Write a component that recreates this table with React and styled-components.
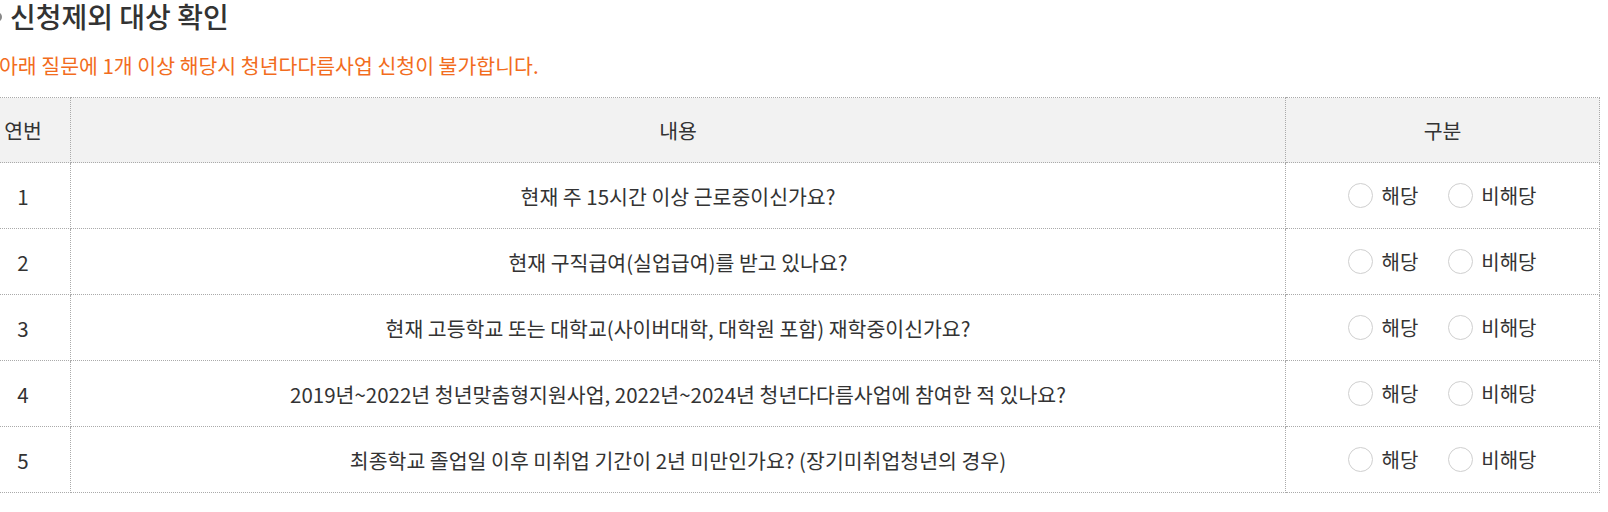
import React from "react";
import styled, { createGlobalStyle } from "styled-components";

const Global = createGlobalStyle`
  html, body { margin: 0; padding: 0; background: #fff; }
  body { font-family: "Noto Sans CJK KR", "Noto Sans", sans-serif; color: #333; overflow: hidden; }
`;

const Wrap = styled.div`
  margin-left: -25px;
  width: 1625px;
`;

const Title = styled.h3`
  display: flex;
  align-items: center;
  gap: 8px;
  margin: 0;
  font-size: 28px;
  font-weight: 500;
  color: #333;
  line-height: 33px;
  padding-left: 17px;
  &::before {
    content: "";
    width: 10px;
    height: 10px;
    border-radius: 50%;
    background: #888;
    flex: none;
  }
`;

const Notice = styled.p`
  margin: 19px 0 0;
  padding-left: 24px;
  font-size: 20.5px;
  line-height: 26px;
  color: #f26c1d;
`;

const Table = styled.table`
  margin-top: 19px;
  width: 100%;
  border-collapse: collapse;
  table-layout: fixed;
  font-size: 20.5px;
  color: #333;
`;

const Th = styled.th`
  height: 64px;
  background: #f2f2f2;
  border: 1px dotted #aaa;
  font-weight: 400;
  text-align: center;
  width: ${(p) => p.w || "auto"};
  padding: 0;
`;

const Td = styled.td`
  height: 65px;
  border: 1px dotted #aaa;
  text-align: center;
  padding: 0;
`;

const RadioGroup = styled.div`
  display: flex;
  justify-content: center;
  align-items: center;
  gap: 30px;
  font-size: 20px;
`;

const Label = styled.label`
  display: flex;
  align-items: center;
  gap: 8px;
  cursor: pointer;
`;

const Circle = styled.span`
  width: 23px;
  height: 23px;
  border: 1px solid #cfcfcf;
  border-radius: 50%;
  background: #fff;
  flex: none;
`;

const rows = [
  "현재 주 15시간 이상 근로중이신가요?",
  "현재 구직급여(실업급여)를 받고 있나요?",
  "현재 고등학교 또는 대학교(사이버대학, 대학원 포함) 재학중이신가요?",
  "2019년~2022년 청년맞춤형지원사업, 2022년~2024년 청년다다름사업에 참여한 적 있나요?",
  "최종학교 졸업일 이후 미취업 기간이 2년 미만인가요? (장기미취업청년의 경우)",
];

export default function App() {
  return (
    <Wrap>
      <Global />
      <Title>신청제외 대상 확인</Title>
      <Notice>아래 질문에 1개 이상 해당시 청년다다름사업 신청이 불가합니다.</Notice>
      <Table>
        <thead>
          <tr>
            <Th w="94px">연번</Th>
            <Th>내용</Th>
            <Th w="313px">구분</Th>
          </tr>
        </thead>
        <tbody>
          {rows.map((r, i) => (
            <tr key={i}>
              <Td>{i + 1}</Td>
              <Td>{r}</Td>
              <Td>
                <RadioGroup>
                  <Label><Circle />해당</Label>
                  <Label><Circle />비해당</Label>
                </RadioGroup>
              </Td>
            </tr>
          ))}
        </tbody>
      </Table>
    </Wrap>
  );
}
